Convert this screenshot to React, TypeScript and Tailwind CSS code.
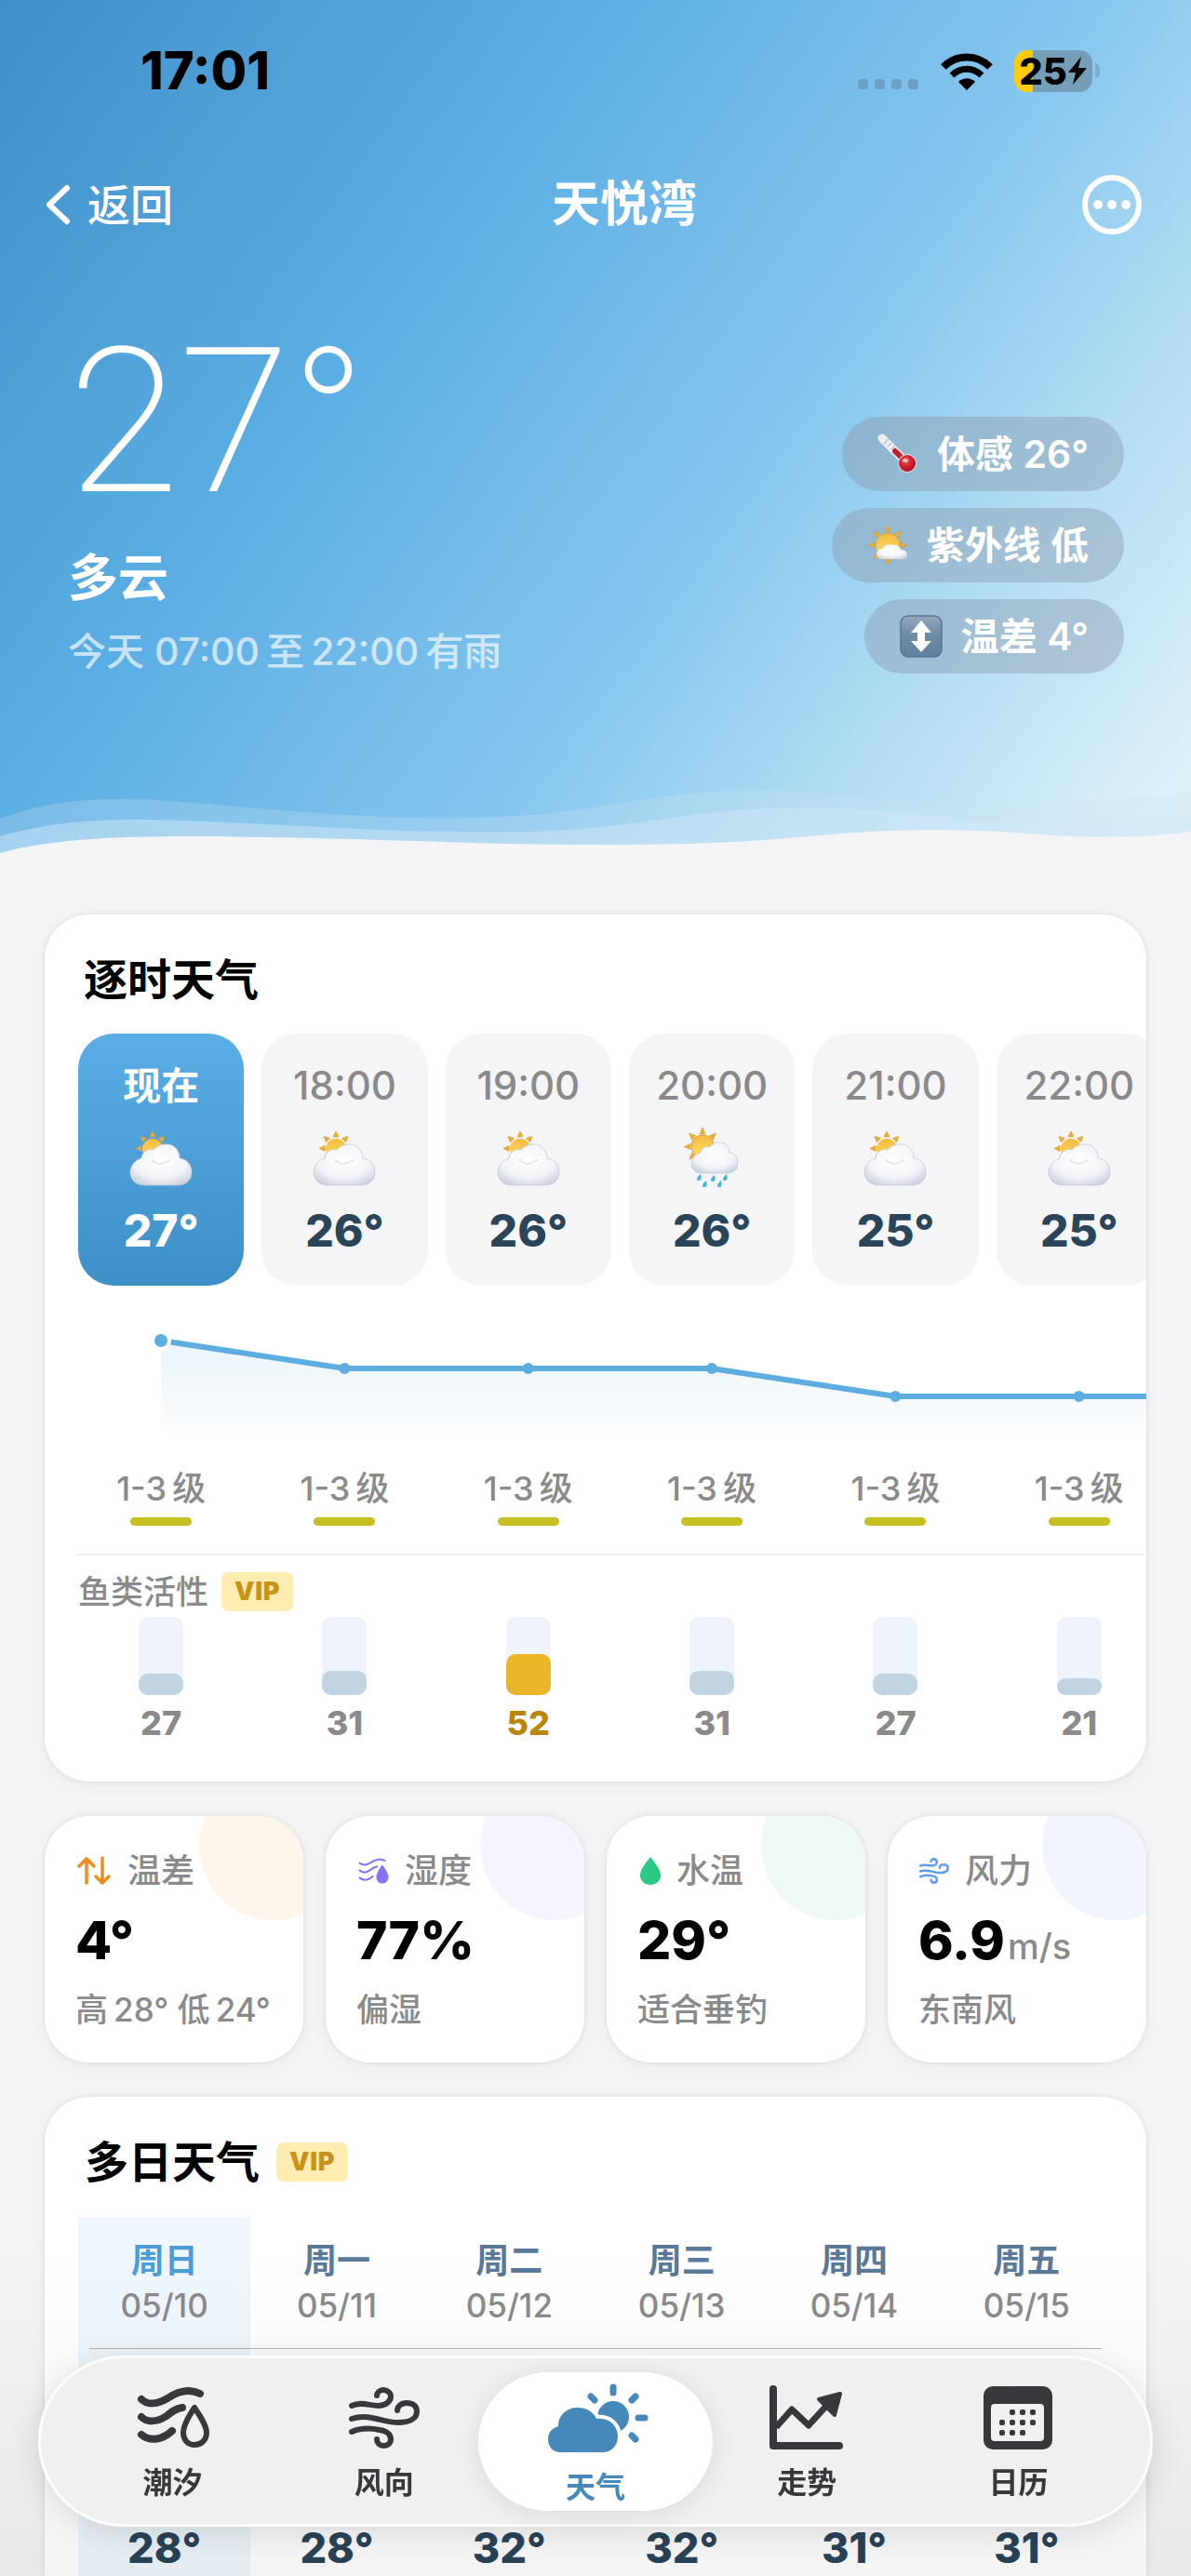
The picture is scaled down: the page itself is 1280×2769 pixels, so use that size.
import type { ReactNode } from "react";

/* ---------- weather pictures ---------- */

function Defs() {
  return (
    <svg className="absolute size-0" aria-hidden="true">
      <defs>
        <linearGradient id="sunFill" x1="0" y1="0" x2="0" y2="1">
          <stop offset="0" stopColor="#f6b93a" />
          <stop offset="1" stopColor="#fbdf6a" />
        </linearGradient>
        <radialGradient id="cloudFill" cx="0.5" cy="0.4" r="0.65">
          <stop offset="0" stopColor="#ffffff" />
          <stop offset="0.65" stopColor="#f3f4f8" />
          <stop offset="1" stopColor="#cdd2de" />
        </radialGradient>
        <linearGradient id="keyFill" x1="0" y1="0" x2="0" y2="1">
          <stop offset="0" stopColor="#93a7ba" />
          <stop offset="0.5" stopColor="#6d89a5" />
          <stop offset="1" stopColor="#62809f" />
        </linearGradient>
        <radialGradient id="bulbFill" cx="0.4" cy="0.35" r="0.7">
          <stop offset="0" stopColor="#f0605f" />
          <stop offset="0.5" stopColor="#cf2230" />
          <stop offset="1" stopColor="#a80f1f" />
        </radialGradient>
        <linearGradient id="areaFill" x1="0" y1="0" x2="0" y2="1">
          <stop offset="0" stopColor="#5dade2" stopOpacity="0.13" />
          <stop offset="1" stopColor="#5dade2" stopOpacity="0.02" />
        </linearGradient>
      </defs>
    </svg>
  );
}

function Rays({ cx, cy, from, to, angles }: { cx: number; cy: number; from: number; to: number; angles: number[] }) {
  return (
    <>
      {angles.map((a) => (
        <path
          key={a}
          transform={`rotate(${a} ${cx} ${cy})`}
          d={`M${cx - 3} ${cy - from} L${cx} ${cy - to} L${cx + 3} ${cy - from} Z`}
          fill="#eab02e"
          stroke="#d9992a"
          strokeWidth="0.6"
        />
      ))}
    </>
  );
}

function CloudySun() {
  return (
    <svg viewBox="0 0 68 66" className="h-[66px] w-[68px]" aria-hidden="true">
      <g transform="translate(0 4)">
        <Rays cx={25} cy={18} from={12} to={18} angles={[-135, -92, -46, 0, 46]} />
        <circle cx="25" cy="19" r="11" fill="url(#sunFill)" />
        <path
          d="M16 58 C6 58 1 51 1 44 C1 37 6 31 13 29 C14 22 20 18 26 20 C30 15 35 14 40 14 C49 14 54 21 54 29 C62 30 67 36 67 44 C67 52 61 58 52 58 Z"
          fill="url(#cloudFill)"
          stroke="#c3c9d6"
          strokeWidth="0.8"
        />
        <path d="M24 30 C26 33 30 35 34 35 C38 34 41 32 44 31" fill="none" stroke="#dfe2ea" strokeWidth="1.5" />
      </g>
    </svg>
  );
}

const drops = [
  [18, 54],
  [33, 55],
  [46, 54],
  [24, 61],
  [40, 61],
];

function RainySun() {
  return (
    <svg viewBox="0 0 68 66" className="h-[66px] w-[68px]" aria-hidden="true">
      <g transform="translate(2 0)">
        <Rays cx={22} cy={20} from={13} to={20} angles={[-135, -92, -46, 0, 46]} />
        <circle cx="22" cy="20" r="12" fill="url(#sunFill)" stroke="#e39a2c" />
        <path
          d="M20 49 C14 49 10 44 10 39 C10 33 14 28 19 28 C21 22 25 20 30 21 C33 17 37 16 40 16 C47 16 51 21 51 27 C57 28 60 33 60 38 C60 45 55 49 50 49 Z"
          fill="url(#cloudFill)"
          stroke="#c3c9d6"
          strokeWidth="0.8"
        />
        {drops.map(([x, y]) => (
          <path
            key={x}
            d={`M${x + 2} ${y - 4} C${x + 3} ${y} ${x + 3} ${y + 3} ${x} ${y + 3} C${x - 3} ${y + 3} ${x - 3} ${y} ${x + 2} ${y - 4} Z`}
            fill="#45b4e0"
          />
        ))}
      </g>
    </svg>
  );
}

function SmallSun() {
  return (
    <svg viewBox="0 0 44 44" className="size-11" aria-hidden="true">
      <Rays cx={22} cy={22} from={15} to={21} angles={[0, 45, 90, 180, 225, 270, 315]} />
      <circle cx="22" cy="22" r="13" fill="url(#sunFill)" stroke="#e39a2c" strokeWidth="0.8" />
      <path
        d="M17 37 C12 37 10 34 10 31 C10 28 13 26 16 26 C18 22 24 20 28 22 C31 21 35 23 36 27 C41 27 43 30 43 32 C43 35 41 37 38 37 Z"
        fill="url(#cloudFill)"
      />
    </svg>
  );
}

function Thermometer() {
  return (
    <svg viewBox="0 0 44 44" className="size-11" aria-hidden="true">
      <path d="M5 5 L32 32" stroke="#eceef2" strokeWidth="9" strokeLinecap="round" />
      <path d="M12 6 L7 11 M15 10 L11 14 M19 13 L15 17" stroke="#b9c3cf" strokeWidth="1.4" />
      <path d="M19 19 L32 32" stroke="#c01f2c" strokeWidth="6" strokeLinecap="round" />
      <circle cx="32" cy="32" r="10" fill="#e3e0e4" />
      <circle cx="32" cy="32" r="9" fill="url(#bulbFill)" />
      <ellipse cx="30" cy="29" rx="3" ry="2" fill="#ffffff" opacity="0.6" />
    </svg>
  );
}

function UpDownKey() {
  return (
    <svg viewBox="0 0 46 46" className="size-[46px]" aria-hidden="true">
      <rect x="1" y="1" width="44" height="44" rx="8" fill="url(#keyFill)" stroke="#587491" strokeWidth="1.5" />
      <path d="M23 6 L34 19 H27 V28 H34 L23 40 L12 28 H19 V19 H12 Z" fill="#ffffff" />
    </svg>
  );
}

/* ---------- line icons ---------- */

function TideIcon({ className, solid = false }: { className: string; solid?: boolean }) {
  return (
    <svg viewBox="0 0 80 66" className={className} fill="none" stroke="currentColor" strokeLinecap="round" aria-hidden="true">
      <path d="M6 13 C12 19 22 19 34 12 C46 4 57 1 69 7" strokeWidth={solid ? 5 : 8} />
      <path d="M6 32 C12 38 22 38 33 31 C39 26 43 23 50 22" strokeWidth={solid ? 5 : 8} />
      <path d="M6 51 C14 58 27 58 39 47" strokeWidth={solid ? 5 : 8} />
      <path
        d="M63 22 C57 31 51 41 51 49 C51 57 56 62 63 62 C70 62 76 57 76 49 C76 41 69 31 63 22 Z"
        strokeWidth="6"
        strokeLinejoin="round"
        fill={solid ? "currentColor" : "none"}
      />
    </svg>
  );
}

function WindIcon({ className }: { className: string }) {
  return (
    <svg viewBox="0 0 76 66" className={className} fill="none" stroke="currentColor" strokeWidth="6" strokeLinecap="round" aria-hidden="true">
      <path d="M3 20 C13 15 22 20 31 20 C40 20 45 15 45 10 C45 6 41 3 37 3 C33 3 30 6 30 9" />
      <path d="M3 34 C22 28 36 38 53 38 C65 38 73 34 73 26 C73 20 68 17 62 17 C56 17 52 21 52 25" />
      <path d="M3 48 C12 44 24 44 33 46 C41 47 45 51 45 56 C45 61 41 63 37 63 C33 63 30 60 30 56" />
    </svg>
  );
}

function WeatherIcon() {
  return (
    <svg viewBox="-6 0 114 75" className="h-[75px] w-[114px]" fill="none" aria-hidden="true">
      <g stroke="currentColor" strokeWidth="7" strokeLinecap="round">
        <path d="M70 4 V10 M46 14 L50 18 M94 14 L90 18 M97 37 H104 M90 56 L94 60" />
      </g>
      <circle cx="70" cy="36" r="17" fill="currentColor" />
      <path
        d="M14 74 C5 74 0 68 0 60 C0 53 4 48 11 46 C11 34 20 26 32 26 C42 26 49 31 52 38 C65 36 75 45 75 57 C75 67 68 74 59 74 Z"
        fill="currentColor"
        stroke="#ffffff"
        strokeWidth="8"
        paintOrder="stroke"
      />
    </svg>
  );
}

function TrendIcon() {
  return (
    <svg viewBox="0 0 80 70" className="h-[70px] w-20" fill="none" stroke="currentColor" aria-hidden="true">
      <path d="M4 4 V65 H75" strokeWidth="8" strokeLinecap="round" strokeLinejoin="round" />
      <path d="M7 45 L24 26 L42 43 L64 19" strokeWidth="7" strokeLinejoin="round" />
      <path d="M53 15 L76 9 L70 32 Z" fill="currentColor" strokeWidth="4" strokeLinejoin="round" />
    </svg>
  );
}

const calendarDots = [
  [31, 28], [42, 28], [53, 28],
  [20, 39], [31, 39], [42, 39], [53, 39],
  [20, 50], [31, 50], [42, 50],
];

function CalendarIcon() {
  return (
    <svg viewBox="0 0 74 68" className="h-[68px] w-[74px]" aria-hidden="true">
      <rect width="74" height="68" rx="10" fill="currentColor" />
      <rect x="8" y="19" width="57" height="40" rx="4" fill="#f1f1f2" />
      {calendarDots.map(([x, y]) => (
        <rect key={`${x}-${y}`} x={x - 3} y={y - 3} width="6" height="6" rx="2" fill="currentColor" />
      ))}
    </svg>
  );
}

function ArrowsIcon() {
  return (
    <svg viewBox="0 0 38 32" className="h-8 w-[38px]" fill="none" stroke="currentColor" strokeWidth="3.5" strokeLinecap="round" strokeLinejoin="round" aria-hidden="true">
      <path d="M11 29 V3 M3 11 L11 3 L19 11" />
      <path d="M28 2 V29 M21 22 L28 29 L35 22" />
    </svg>
  );
}

function DropIcon() {
  return (
    <svg viewBox="0 0 24 32" className="h-8 w-6" fill="currentColor" aria-hidden="true">
      <path d="M13 1 C8 8 2 14 2 21 C2 27 7 31 13 31 C19 31 24 27 24 21 C24 14 18 8 13 1 Z" />
    </svg>
  );
}

/* ---------- shared pieces ---------- */

function VipBadge() {
  return (
    <span className="rounded-lg bg-[#feecb0] px-[14px] text-[27px] leading-[42px] font-black tracking-wide text-[#c8931a]">
      VIP
    </span>
  );
}

const cardShadow = "shadow-[0_0_6px_rgba(0,0,0,0.09),0_6px_20px_rgba(0,0,0,0.03)]";

/* ---------- header ---------- */

function StatusBar() {
  return (
    <div className="flex h-[60px] items-center justify-between pr-[98px] pl-[151px] text-black">
      <span className="text-[56px] leading-[60px] font-extrabold">17:01</span>
      <div className="flex items-center">
        <div className="mt-7 flex gap-[7px]">
          {[0, 1, 2, 3].map((i) => (
            <span key={i} className="size-[11px] rounded-[4px] bg-[#6c9fc4]" />
          ))}
        </div>
        <svg viewBox="0 0 58 42" className="ml-[23px] h-[42px] w-[58px]" aria-hidden="true">
          <path d="M29 42 L20 33 C25 28 33 28 38 33 Z" />
          <path d="M4 17 C18 3 40 3 54 17" fill="none" stroke="#000" strokeWidth="8" />
          <path d="M13 26 C22 17 36 17 45 26" fill="none" stroke="#000" strokeWidth="7" />
        </svg>
        <div className="ml-[22px] flex h-[45px] w-[84px] items-center justify-center rounded-[14px] bg-[linear-gradient(90deg,#fccb0a_20px,#779eb9_20px)]">
          <span className="text-[40px] leading-[45px] font-extrabold">25</span>
          <svg viewBox="0 0 22 30" className="h-[30px] w-[22px]" aria-hidden="true">
            <path d="M15 0 L1 17 H9 L6 30 L21 12 H12 Z" />
          </svg>
        </div>
        <span className="ml-[3px] h-4 w-[5px] rounded-r-full bg-[#7fadcb]" />
      </div>
    </div>
  );
}

function Pill({ icon, children }: { icon: ReactNode; children: ReactNode }) {
  return (
    <div className="flex h-20 items-center gap-5 rounded-full bg-[#8c9cb0]/45 px-[38px] text-[41px] leading-[48px] font-semibold whitespace-nowrap">
      {icon}
      <span>{children}</span>
    </div>
  );
}

function Hero() {
  return (
    <header className="relative bg-[linear-gradient(126deg,#3f90c8_0%,#5baee4_33%,#8bc9ef_63%,#b0dcf3_77%,#e4f4fb_100%)] pt-[46px] pb-[196px] text-white">
      <StatusBar />
      <nav className="mt-[81px] grid h-16 grid-cols-[1fr_auto_1fr] items-center pr-[52px] pl-12">
        <button type="button" className="flex items-center gap-[18px] justify-self-start text-[46px] leading-[64px] font-medium">
          <svg viewBox="0 0 28 44" className="h-11 w-7" fill="none" stroke="currentColor" strokeWidth="6" strokeLinecap="round" strokeLinejoin="round" aria-hidden="true">
            <path d="M24 4 L5 22 L24 40" />
          </svg>
          返回
        </button>
        <h1 className="pl-[66px] text-[52px] leading-[64px] font-bold">天悦湾</h1>
        <button type="button" aria-label="更多" className="justify-self-end">
          <svg viewBox="0 0 66 66" className="size-[66px]" aria-hidden="true">
            <circle cx="33" cy="33" r="29" fill="none" stroke="currentColor" strokeWidth="6" />
            <circle cx="18" cy="33" r="5" fill="currentColor" />
            <circle cx="33" cy="33" r="5" fill="currentColor" />
            <circle cx="48" cy="33" r="5" fill="currentColor" />
          </svg>
        </button>
      </nav>
      <section className="mt-[95px] flex items-end justify-between pr-[72px] pl-[73px]">
        <div>
          <p className="font-['Roboto','Inter',sans-serif] text-[217px] leading-[216px] font-extralight">27°</p>
          <p className="mt-[30px] text-[54px] leading-[60px] font-bold">多云</p>
          <p className="mt-6 text-[41px] leading-[48px] font-medium text-white/65">{"今天 07:00\u2009至\u200922:00\u2009有雨"}</p>
        </div>
        <div className="flex flex-col items-end gap-[18px]">
          <Pill icon={<Thermometer />}>体感 26°</Pill>
          <Pill icon={<SmallSun />}>紫外线 低</Pill>
          <Pill icon={<UpDownKey />}>温差 4°</Pill>
        </div>
      </section>
      <svg viewBox="0 0 1280 80" preserveAspectRatio="none" className="absolute inset-x-0 -bottom-px h-20 w-full" aria-hidden="true">
        <path
          d="M0 39 C60 15 130 15 210 22 C330 33 440 42 540 37 C650 32 700 10 800 9 C900 8 960 24 1080 22 C1160 21 1220 18 1280 10 V80 H0 Z"
          fill="#cbe2f2"
          opacity="0.28"
        />
        <path
          d="M0 58 C70 38 130 38 220 42 C340 47 460 56 570 53 C700 48 740 28 860 27 C960 26 1000 42 1120 42 C1190 42 1230 36 1280 34 V80 H0 Z"
          fill="#cfe8f8"
          opacity="0.5"
        />
        <path
          d="M0 76 C70 56 180 57 290 59 C420 61 540 68 680 67 C800 66 840 60 920 54 C990 49 1060 51 1120 56 C1170 60 1230 60 1280 53 V80 H0 Z"
          fill="#f4f4f7"
        />
      </svg>
    </header>
  );
}

/* ---------- hourly forecast ---------- */

const hours = [
  { time: "现在", temp: 27, wind: "1-3\u2009级", fish: 27, rain: false },
  { time: "18:00", temp: 26, wind: "1-3\u2009级", fish: 31, rain: false },
  { time: "19:00", temp: 26, wind: "1-3\u2009级", fish: 52, rain: false },
  { time: "20:00", temp: 26, wind: "1-3\u2009级", fish: 31, rain: true },
  { time: "21:00", temp: 25, wind: "1-3\u2009级", fish: 27, rain: false },
  { time: "22:00", temp: 25, wind: "1-3\u2009级", fish: 21, rain: false },
];

const chartPoints = hours.map((h, i) => ({ x: 89 + (i * 1184) / 6, y: 59 + (27 - h.temp) * 30 }));
const chartLine = chartPoints.map((p) => `${p.x},${p.y}`).join(" ");

function Hourly() {
  return (
    <section className={`overflow-hidden rounded-[48px] bg-white pt-[42px] pb-[45px] pl-9 ${cardShadow}`}>
      <h2 className="pl-[6px] text-[47px] leading-[56px] font-bold text-black">逐时天气</h2>
      <div className="-mr-9 w-[calc(100%+36px)]">
        <ol className="mt-[30px] grid grid-cols-6">
          {hours.map((h, i) => (
            <li key={h.time} className="pr-[19px]">
              <div
                className={
                  i === 0
                    ? "flex flex-col items-center rounded-[38px] bg-linear-to-b from-[#5aaee5] to-[#3d8fc8] pt-8 pb-[31px] text-white"
                    : "flex flex-col items-center rounded-[38px] bg-[#f5f5f7] pt-8 pb-[31px] text-[#2a4459]"
                }
              >
                <span className={i === 0 ? "text-[41px] leading-[48px] font-bold" : "text-[42px] leading-[48px] font-medium text-[#8a8a8d]"}>
                  {h.time}
                </span>
                <span className="mt-[21px]">{h.rain ? <RainySun /> : <CloudySun />}</span>
                <span className="mt-[17px] text-[48px] leading-[56px] font-extrabold">{h.temp}°</span>
              </div>
            </li>
          ))}
        </ol>
        <svg viewBox="0 0 1184 160" preserveAspectRatio="none" className="h-40 w-full" aria-hidden="true">
          <polygon points={`89,157 ${chartLine} 1184,119 1184,157`} fill="url(#areaFill)" />
          <polyline points={`${chartLine} 1184,119`} fill="none" stroke="#5dade0" strokeWidth="6" />
          {chartPoints.map((p, i) => (
            <circle
              key={p.x}
              cx={p.x}
              cy={p.y}
              r={i === 0 ? 9 : 6}
              fill="#5dade0"
              stroke={i === 0 ? "#ffffff" : "none"}
              strokeWidth={4}
            />
          ))}
        </svg>
        <ol className="mt-[38px] grid grid-cols-6">
          {hours.map((h) => (
            <li key={h.time} className="flex flex-col items-center pr-[19px]">
              <span className="text-[36px] leading-10 font-medium text-[#8a8a8d]">{h.wind}</span>
              <span className="mt-[11px] h-[9px] w-[66px] rounded-full bg-[#c8c022]" />
            </li>
          ))}
        </ol>
        <hr className="mt-[30px] -ml-1 border-t-2 border-[#f2f2f4]" />
        <h3 className="mt-[18px] flex items-center gap-[14px] text-[35px] leading-[42px] font-medium text-[#8a8a8d]">
          鱼类活性
          <VipBadge />
        </h3>
        <ol className="mt-[6px] grid grid-cols-6">
          {hours.map((h) => (
            <li key={h.time} className="flex flex-col items-center pr-[19px]">
              <span className="flex h-[84px] w-12 flex-col justify-end rounded-[10px] bg-[#eff3fb]">
                <span
                  className={h.fish > 50 ? "rounded-[10px] bg-[#ebb529]" : "rounded-[10px] bg-[#c2d3e2]"}
                  style={{ height: `${h.fish}%` }}
                />
              </span>
              <span
                className={
                  h.fish > 50
                    ? "mt-3 text-[36px] leading-9 font-extrabold text-[#b8860b]"
                    : "mt-3 text-[36px] leading-9 font-extrabold text-[#8a8a8d]"
                }
              >
                {h.fish}
              </span>
            </li>
          ))}
        </ol>
      </div>
    </section>
  );
}

/* ---------- metric cards ---------- */

const metrics = [
  { label: "温差", value: "4°", unit: "", note: "高\u200928° 低\u200924°", circle: "bg-[#fef6ec]", tint: "text-[#ef8c1f]", icon: <ArrowsIcon /> },
  { label: "湿度", value: "77%", unit: "", note: "偏湿", circle: "bg-[#f6f4fe]", tint: "text-[#8a72f5]", icon: <TideIcon className="h-7 w-[34px]" solid /> },
  { label: "水温", value: "29°", unit: "", note: "适合垂钓", circle: "bg-[#effaf4]", tint: "text-[#2cc985]", icon: <DropIcon /> },
  { label: "风力", value: "6.9", unit: "m/s", note: "东南风", circle: "bg-[#f1f6fe]", tint: "text-[#5f9cf5]", icon: <WindIcon className="h-7 w-8" /> },
];

function Metrics() {
  return (
    <section className="mt-[37px] grid grid-cols-4 gap-6">
      {metrics.map((m) => (
        <article key={m.label} className={`relative overflow-hidden rounded-[48px] bg-white pt-[39px] pr-3 pb-[37px] pl-[33px] ${cardShadow}`}>
          <span className={`absolute -top-12 -right-12 size-40 rounded-full ${m.circle}`} />
          <h3 className="relative flex items-center gap-[17px] pl-px text-[36px] leading-10 font-medium text-[#8a8a8d]">
            <span className={m.tint}>{m.icon}</span>
            {m.label}
          </h3>
          <p className="mt-[27px] flex h-14 items-baseline text-[57px] leading-[56px] font-extrabold text-black">
            {m.value}
            {m.unit && <span className="ml-[3px] text-[38px] leading-10 font-medium text-[#8a8a8d]">{m.unit}</span>}
          </p>
          <p className="mt-[26px] text-[35px] leading-10 font-medium whitespace-nowrap text-[#8a8a8d]">{m.note}</p>
        </article>
      ))}
    </section>
  );
}

/* ---------- daily forecast ---------- */

const days = [
  { name: "周日", date: "05/10", high: 28 },
  { name: "周一", date: "05/11", high: 28 },
  { name: "周二", date: "05/12", high: 32 },
  { name: "周三", date: "05/13", high: 32 },
  { name: "周四", date: "05/14", high: 31 },
  { name: "周五", date: "05/15", high: 31 },
];

function Daily() {
  return (
    <section className={`mt-[37px] grow rounded-t-[48px] bg-white px-9 pt-[42px] ${cardShadow}`}>
      <h2 className="flex items-center gap-[18px] pl-[7px] text-[47px] leading-[56px] font-bold text-black">
        多日天气
        <VipBadge />
      </h2>
      <div className="relative mt-[31px]">
        <table className="w-full table-fixed text-center">
          <thead>
            <tr>
              {days.map((d, i) => (
                <th key={d.date} scope="col" className={i === 0 ? "bg-[#f0f7fc] p-0 pt-[27px] pb-[28px]" : "p-0 pt-[27px] pb-[28px]"}>
                  <span className={i === 0 ? "block text-[36px] leading-10 font-bold text-[#4a9fd8]" : "block text-[36px] leading-10 font-bold text-[#5a7898]"}>
                    {d.name}
                  </span>
                  <span className="mt-2 block text-[35px] leading-10 font-medium text-[#8a8a8d]">{d.date}</span>
                </th>
              ))}
            </tr>
          </thead>
          <tbody>
            <tr>
              {days.map((d, i) => (
                <td
                  key={d.date}
                  className={
                    i === 0
                      ? "bg-[#f0f7fc] p-0 pt-[191px] pb-2 text-[45px] leading-[44px] font-extrabold text-[#2a4459]"
                      : "p-0 pt-[191px] pb-2 text-[45px] leading-[44px] font-extrabold text-[#2a4459]"
                  }
                >
                  {d.high}°
                </td>
              ))}
            </tr>
          </tbody>
        </table>
        <span className="absolute inset-x-3 top-[141px] h-px bg-[#b4b4b8]" />
      </div>
    </section>
  );
}

/* ---------- tab bar ---------- */

const tabs = [
  { label: "潮汐", icon: <TideIcon className="h-[66px] w-20" /> },
  { label: "风向", icon: <WindIcon className="h-[66px] w-[76px]" /> },
  { label: "天气", icon: <WeatherIcon />, active: true },
  { label: "走势", icon: <TrendIcon /> },
  { label: "日历", icon: <CalendarIcon /> },
];

function TabBar() {
  return (
    <>
      <div className="pointer-events-none fixed inset-x-0 bottom-0 h-[360px] bg-linear-to-b from-white to-[#f4f4f4] mix-blend-multiply" />
      <nav className="fixed inset-x-[41px] bottom-[53px] grid h-[184px] grid-cols-5 items-center rounded-full border-[3px] border-white/80 bg-[#f0f0f1]/97 px-7 shadow-[0_6px_36px_rgba(0,0,0,0.12)]">
        {tabs.map((t) => (
          <a
            key={t.label}
            href="#"
            aria-current={t.active ? "page" : undefined}
            className={
              t.active
                ? "-mx-3 flex h-[149px] flex-col items-center rounded-full bg-white pt-3 text-[#4688ba] shadow-[0_4px_28px_rgba(0,0,0,0.10)]"
                : "flex h-[149px] flex-col items-center pt-3 text-[#38383c]"
            }
          >
            <span className="flex h-[75px] items-center">{t.icon}</span>
            <span className={t.active ? "mt-[17px] text-[32px] leading-10 font-bold" : "mt-3 text-[32px] leading-10 font-bold"}>{t.label}</span>
          </a>
        ))}
      </nav>
    </>
  );
}

export default function App() {
  return (
    <div className="flex min-h-screen flex-col bg-[#f4f4f7] font-['Inter','Noto_Sans_CJK_SC',sans-serif]">
      <Defs />
      <Hero />
      <main className="flex grow flex-col px-12 pt-[63px]">
        <Hourly />
        <Metrics />
        <Daily />
      </main>
      <TabBar />
    </div>
  );
}
